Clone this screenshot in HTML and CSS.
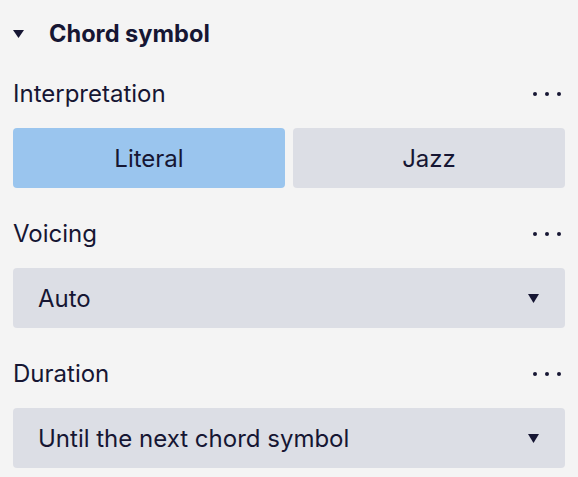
FILE: index.html
```html
<!DOCTYPE html>
<html>
<head>
<meta charset="utf-8">
<link rel="stylesheet" href="styles.css">
</head>
<body>
<div class="panel">
  <div class="header">
    <svg class="caret" width="11" height="8" viewBox="0 0 11 8"><path d="M0 0H11L5.5 8Z"/></svg>
    <span class="title">Chord symbol</span>
  </div>
  <div class="label-row">
    <span class="label">Interpretation</span>
    <span class="more"><i></i><i></i><i></i></span>
  </div>
  <div class="toggle">
    <button class="opt active">Literal</button>
    <button class="opt">Jazz</button>
  </div>
  <div class="label-row">
    <span class="label">Voicing</span>
    <span class="more"><i></i><i></i><i></i></span>
  </div>
  <div class="dropdown">
    <span>Auto</span>
    <svg class="arrow" width="11" height="9" viewBox="0 0 11 9"><path d="M0 0H11L5.5 9Z"/></svg>
  </div>
  <div class="label-row">
    <span class="label">Duration</span>
    <span class="more"><i></i><i></i><i></i></span>
  </div>
  <div class="dropdown">
    <span>Until the next chord symbol</span>
    <svg class="arrow" width="11" height="9" viewBox="0 0 11 9"><path d="M0 0H11L5.5 9Z"/></svg>
  </div>
</div>
</body>
</html>
```
FILE: styles.css
```css
html, body {
  margin: 0;
  padding: 0;
  background: #f4f4f4;
}
body {
  font-family: Inter, "Noto Sans", sans-serif;
  color: #161633;
}
.panel {
  padding: 15px 13px 0 13px;
  display: flex;
  flex-direction: column;
}
.header {
  height: 36px;
  display: flex;
  align-items: center;
  margin-bottom: 24px;
}
.caret {
  fill: #161633;
  margin-right: 25px;
  margin-top: 1px;
}
.title {
  font-size: 23.6px;
  font-weight: 700;
}
.label-row {
  height: 36px;
  display: flex;
  align-items: center;
  justify-content: space-between;
  margin-bottom: 17px;
}
.label-row ~ .label-row {
  margin-top: 27px;
}
.label {
  font-size: 24px;
}
.more {
  display: flex;
  gap: 8px;
  padding-right: 4px;
  margin-top: 2px;
}
.more i {
  width: 4px;
  height: 4px;
  border-radius: 50%;
  background: #161633;
}
.toggle {
  display: grid;
  grid-template-columns: 1fr 1fr;
  gap: 8px;
}
.opt {
  height: 60px;
  border: none;
  border-radius: 4px;
  background: #dcdee5;
  font-family: inherit;
  font-size: 24px;
  color: #161633;
  padding: 0;
}
.opt.active {
  background: #9ac5ee;
}
.dropdown {
  height: 60px;
  border-radius: 4px;
  background: #dcdee5;
  display: flex;
  align-items: center;
  justify-content: space-between;
  padding: 0 26px 0 25px;
  font-size: 24px;
}
.arrow {
  fill: #161633;
}
```
